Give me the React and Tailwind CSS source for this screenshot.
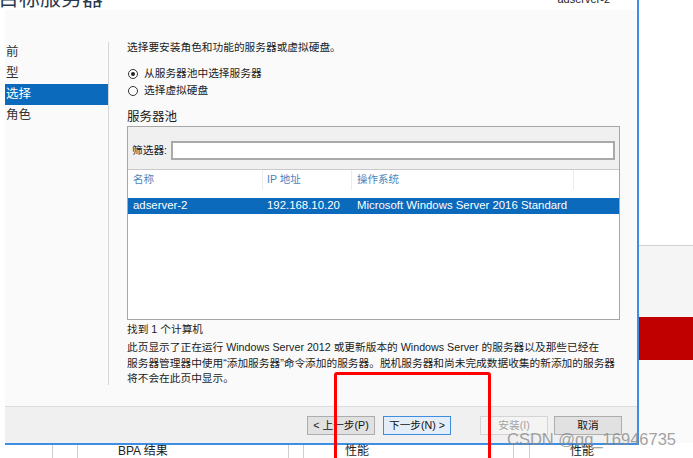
import React from "react";

const font = "[font-family:'Liberation_Sans','Noto_Sans_CJK_SC',sans-serif]";

const Radio = ({ checked, label }) => (
  <div className="flex items-center h-[15px] gap-[6px] pl-[1px]">
    <span className="w-[10px] h-[10px] rounded-full border border-[#333] bg-white flex items-center justify-center">
      {checked && <span className="w-[4px] h-[4px] rounded-full bg-[#222]" />}
    </span>
    <span className="text-[10.7px] text-[#1a1a1a]">{label}</span>
  </div>
);

const Btn = ({ children, variant }) => {
  const styles = {
    normal: "bg-[#e1e1e1] border-[#adadad] text-[#111]",
    focus: "bg-[#e5eef8] border-[#3b8ee0] text-[#111]",
    disabled: "bg-[#f4f4f4] border-[#d4d4d4] text-[#a3a3a3]",
  };
  return (
    <div
      className={`w-[68px] h-[19px] border flex items-center justify-center text-[10.7px] ${styles[variant]}`}
    >
      {children}
    </div>
  );
};

export default function App() {
  return (
    <div className={`relative w-[693px] h-[458px] overflow-hidden bg-white ${font}`}>
      <div className="flex h-[443px]">
        {/* dialog */}
        <div className="ml-[5px] w-[634px] flex flex-col border-r-2 border-[#3c8fe3]">
          <div className="relative z-10 h-[10px] bg-white flex justify-between">
            <div className="-ml-[7px] -mt-[13px] text-[21px] leading-[21px] text-[#2a3a4f] whitespace-nowrap">
              目标服务器
            </div>
            <div className="-mt-[7px] mr-[27px] text-[11px] leading-[12px] text-[#222]">adserver-2</div>
          </div>

          <div className="flex-1 bg-[#fafafa] flex flex-col">
            <div className="flex-1 flex">
              {/* sidebar */}
              <div className="w-[103px] pt-[32px] text-[12.5px] text-[#333]">
                <div className="h-[21px] flex items-center pl-[1px]">前</div>
                <div className="h-[21px] flex items-center pl-[1px]">型</div>
                <div className="h-[21px] flex items-center pl-[1px] bg-[#0b6abb] text-white">选择</div>
                <div className="h-[21px] flex items-center pl-[1px]">角色</div>
              </div>
              <div className="w-px mt-[32px] h-[343px] bg-[#d6d6d6]" />

              {/* content */}
              <div className="ml-[18px] w-[493px] pt-[30px] text-[#1a1a1a]">
                <div className="text-[10.7px] leading-[15px]">选择要安装角色和功能的服务器或虚拟硬盘。</div>
                <div className="mt-[11px] flex flex-col gap-[2px]">
                  <Radio checked label="从服务器池中选择服务器" />
                  <Radio label="选择虚拟硬盘" />
                </div>
                <div className="mt-[11px] text-[12.5px] leading-[16px]">服务器池</div>

                <div className="mt-[1px] h-[194px] border border-[#a6a6a6] bg-white flex flex-col">
                  <div className="h-[43px] bg-[#f0f0f0] border-b border-[#c9c9c9] flex items-center px-[4px] pt-[4px] gap-[4px]">
                    <span className="text-[10.7px]">筛选器:</span>
                    <div className="flex-1 h-[19px] border-2 border-[#a9a9a9] bg-white" />
                  </div>
                  <div className="h-[20px] flex text-[10.5px] text-[#4a83bd]">
                    <div className="w-[135px] pl-[5px] flex items-center border-r border-[#ececec]">名称</div>
                    <div className="w-[89px] pl-[4px] flex items-center border-r border-[#ececec]">IP 地址</div>
                    <div className="w-[222px] pl-[5px] flex items-center border-r border-[#ececec]">操作系统</div>
                  </div>
                  <div className="mt-[8px] h-[16px] flex items-center bg-[#0b6abb] text-white text-[11.4px]">
                    <div className="w-[135px] pl-[5px]">adserver-2</div>
                    <div className="w-[89px] pl-[4px]">192.168.10.20</div>
                    <div className="pl-[5px] whitespace-nowrap">Microsoft Windows Server 2016 Standard</div>
                  </div>
                </div>

                <div className="mt-[-1px] text-[10.7px] leading-[15px] pt-[3px]">找到 1 个计算机</div>
                <div className="mt-[3px] text-[10.7px] leading-[15.5px] whitespace-nowrap">
                  此页显示了正在运行 Windows Server 2012 或更新版本的 Windows Server 的服务器以及那些已经在
                  <br />
                  服务器管理器中使用“添加服务器”命令添加的服务器。脱机服务器和尚未完成数据收集的新添加的服务器
                  <br />
                  将不会在此页中显示。
                </div>
              </div>
            </div>

            {/* footer */}
            <div className="h-[37px] border-t border-[#dcdcdc] bg-[#f0f0f0] flex items-center justify-end pr-[15px]">
              <Btn variant="normal">&lt; 上一步(P)</Btn>
              <div className="ml-[8px]">
                <Btn variant="focus">下一步(N) &gt;</Btn>
              </div>
              <div className="ml-[29px]">
                <Btn variant="disabled">安装(I)</Btn>
              </div>
              <div className="ml-[6px]">
                <Btn variant="normal">取消</Btn>
              </div>
            </div>
          </div>
        </div>

        {/* background window on the right */}
        <div className="flex-1 flex flex-col">
          <div className="h-[246px] bg-white border-b border-[#d2d2d2]" />
          <div className="h-[71px] bg-[#f5f5f5]" />
          <div className="h-[43px] bg-[#c00000]" />
          <div className="flex-1 bg-[#fafafa]" />
        </div>
      </div>

      {/* background table row */}
      <div className="ml-[5px] w-[634px] h-[15px] border-t-2 border-[#3c8fe3] flex text-[12px] text-[#222] leading-[13px]">
        <div className="w-[47px]" />
        <div className="w-[25px] border-l border-[#cfcfcf]" />
        <div className="w-[211px] border-l border-[#cfcfcf] pl-[40px]">BPA 结果</div>
        <div className="w-[15px] border-l border-[#cfcfcf]" />
        <div className="w-[210px] border-l border-[#cfcfcf] pl-[41px]">性能</div>
        <div className="w-[16px] border-l border-[#cfcfcf]" />
        <div className="flex-1 border-l border-[#cfcfcf] pl-[40px]">性能</div>
      </div>

      {/* red annotation box */}
      <div className="absolute left-[334px] top-[372px] w-[157px] h-[100px] border-[3px] border-[#ff0000] rounded-[3px]" />

      {/* watermark */}
      <div className="absolute left-[507px] top-[430px] text-[16.5px] leading-[18px] text-[#8a8a8a]/80 whitespace-nowrap">
        CSDN @qq_16946735
      </div>
    </div>
  );
}
